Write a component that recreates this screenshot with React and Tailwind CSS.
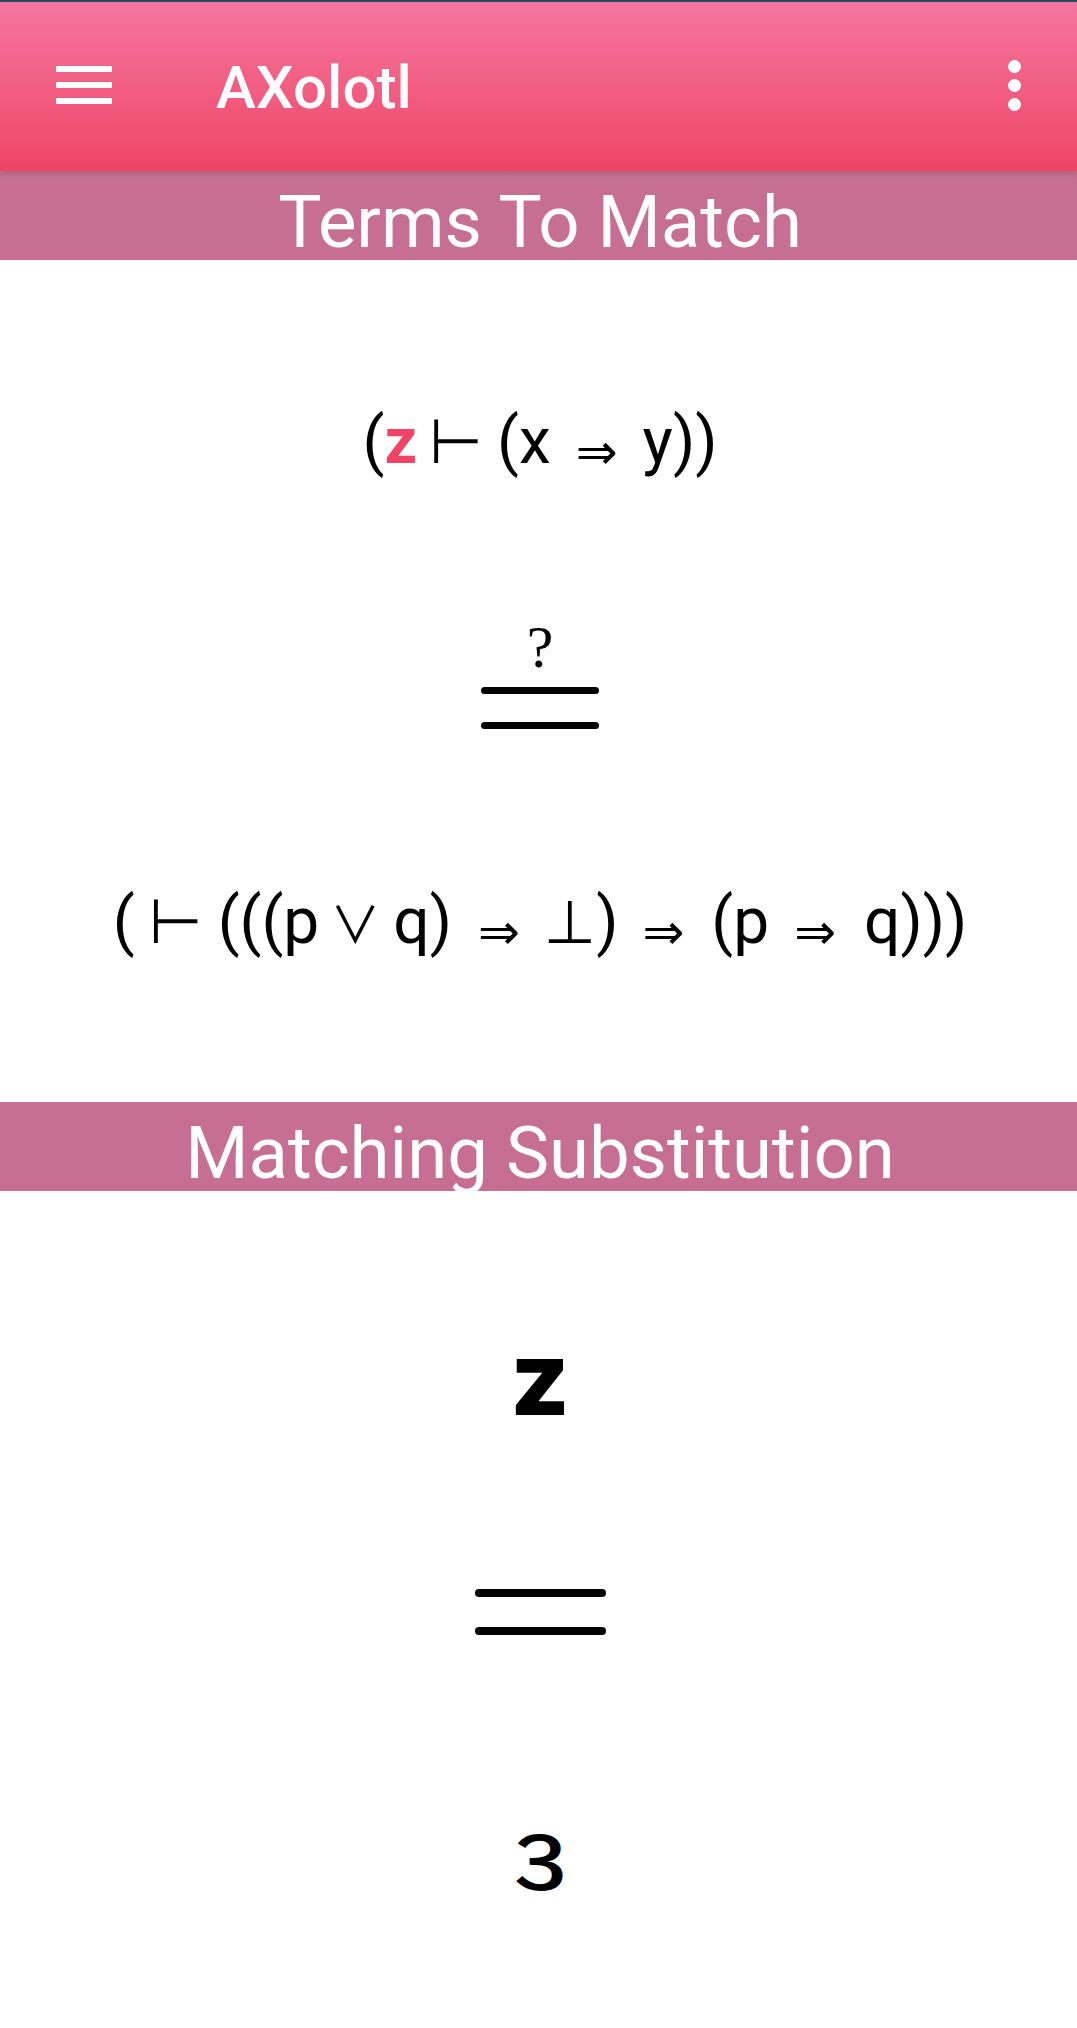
function Arrow({ className = "" }) {
  return <span className={`font-['DejaVu_Sans',sans-serif] text-[50px] translate-y-[6px] ${className}`}>⇒</span>;
}

function Turnstile({ className = "" }) {
  return <span className={`font-['DejaVu_Sans',sans-serif] text-[62px] ${className}`}>⊢</span>;
}

function SectionBand({ children }) {
  return (
    <div className="h-[89px] bg-[#c66f92] text-white text-[72.5px] leading-[104px] text-center overflow-hidden whitespace-nowrap pl-[3px]">
      {children}
    </div>
  );
}

export default function App() {
  return (
    <div className="w-[1077px] h-[2028px] bg-white overflow-hidden font-['Roboto',sans-serif] text-black">
      <div className="h-[2px] bg-[#1f4f55]" />

      {/* app bar */}
      <header className="relative z-10 h-[169px] flex items-center justify-between bg-gradient-to-b from-[#f4749f] to-[#ef4465] text-white shadow-[0_3px_6px_rgba(0,0,0,0.12)]">
        <div className="flex items-center">
          <div className="ml-[56px] w-[56px] flex flex-col gap-[10px] mt-[-3px]">
            <div className="h-[6px] bg-white" />
            <div className="h-[6px] bg-white" />
            <div className="h-[6px] bg-white" />
          </div>
          <div className="ml-[104px] text-[60px] leading-none font-medium mt-[2px]">AXolotl</div>
        </div>
        <div className="mr-[56px] flex flex-col gap-[6px] mt-[-2px]">
          <div className="w-[13px] h-[13px] rounded-full bg-white" />
          <div className="w-[13px] h-[13px] rounded-full bg-white" />
          <div className="w-[13px] h-[13px] rounded-full bg-white" />
        </div>
      </header>

      <SectionBand>Terms To Match</SectionBand>

      <div className="h-[842px] flex flex-col items-center pl-[3px]">
        <div className="mt-[142px] h-[80px] flex items-baseline justify-center text-[64px] leading-[80px] whitespace-pre">
          <span>(</span>
          <span className="font-bold text-[#ef4465]">z</span>
          <Turnstile className="ml-[12px]" />
          <span className="ml-[14px]">(x</span>
          <Arrow className="ml-[25px]" />
          <span className="ml-[25px]">y))</span>
        </div>
        <div className="mt-[140px] h-[50px] text-[60px] leading-[50px] font-['Liberation_Serif',serif]">?</div>
        <div className="mt-[15px] w-[118px] h-[7px] rounded-full bg-black" />
        <div className="mt-[28px] w-[118px] h-[7px] rounded-full bg-black" />
        <div className="mt-[153px] h-[80px] flex items-baseline justify-center text-[64px] leading-[80px] whitespace-pre">
          <span>(</span>
          <Turnstile className="ml-[14px]" />
          <span className="ml-[15px]">(((p</span>
          <span className="w-[54px] ml-[9px] text-center font-['Noto_Sans_CJK_JP',sans-serif] text-[50px] leading-[50px]">∨</span>
          <span className="ml-[11px]">q)</span>
          <Arrow className="ml-[26px]" />
          <span className="ml-[24px] font-['DejaVu_Sans',sans-serif] text-[60px]">⊥</span>
          <span>)</span>
          <Arrow className="ml-[24px]" />
          <span className="ml-[27px]">(p</span>
          <Arrow className="ml-[25px]" />
          <span className="ml-[28px]">q)))</span>
        </div>
      </div>

      <SectionBand>Matching Substitution</SectionBand>

      <div className="flex flex-col items-center pl-[3px]">
        <div className="mt-[135px] h-[100px] text-[103px] leading-none font-extrabold font-['Inter',sans-serif]">z</div>
        <div className="mt-[163px] w-[131px] h-[8px] rounded-full bg-black" />
        <div className="mt-[30px] w-[131px] h-[8px] rounded-full bg-black" />
        <div className="mt-[167px] h-[100px] text-[104px] leading-none font-normal font-['Liberation_Sans',sans-serif] scale-x-[-1.13]">ε</div>
      </div>
    </div>
  );
}
